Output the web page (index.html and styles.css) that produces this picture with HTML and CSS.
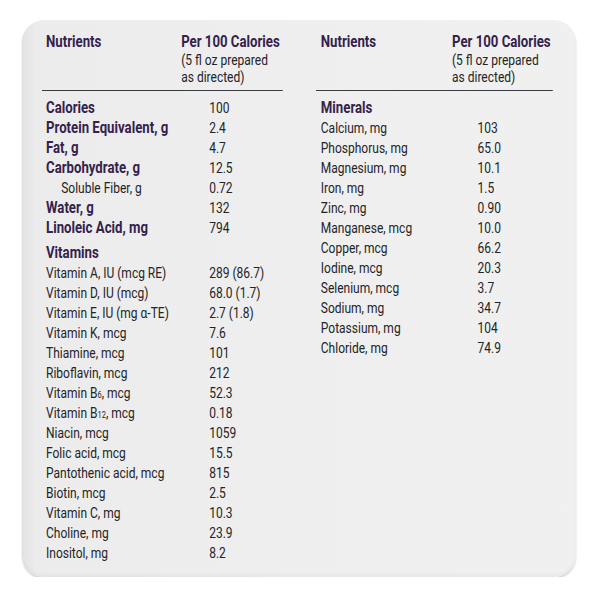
FILE: index.html
```html
<!DOCTYPE html>
<html>
<head>
<meta charset="utf-8">
<link rel="stylesheet" href="styles.css">
</head>
<body>
<div class="card">
  <div class="col">
    <div class="head">
      <div class="h-name">Nutrients</div>
      <div class="h-per"><b>Per 100 Calories</b><br>(5 fl oz prepared<br>as directed)</div>
    </div>
    <div class="sec first">
      <div class="row bold"><span>Calories</span><span class="v">100</span></div>
      <div class="row bold"><span>Protein Equivalent, g</span><span class="v">2.4</span></div>
      <div class="row bold"><span>Fat, g</span><span class="v">4.7</span></div>
      <div class="row bold"><span>Carbohydrate, g</span><span class="v">12.5</span></div>
      <div class="row indent"><span>Soluble Fiber, g</span><span class="v">0.72</span></div>
      <div class="row bold"><span>Water, g</span><span class="v">132</span></div>
      <div class="row bold"><span>Linoleic Acid, mg</span><span class="v">794</span></div>
    </div>
    <div class="sec">
      <div class="row bold"><span>Vitamins</span></div>
      <div class="row"><span>Vitamin A, IU (mcg RE)</span><span class="v">289 (86.7)</span></div>
      <div class="row"><span>Vitamin D, IU (mcg)</span><span class="v">68.0 (1.7)</span></div>
      <div class="row"><span>Vitamin E, IU (mg α-TE)</span><span class="v">2.7 (1.8)</span></div>
      <div class="row"><span>Vitamin K, mcg</span><span class="v">7.6</span></div>
      <div class="row"><span>Thiamine, mcg</span><span class="v">101</span></div>
      <div class="row"><span>Riboflavin, mcg</span><span class="v">212</span></div>
      <div class="row"><span>Vitamin B<span class="sub">6</span>, mcg</span><span class="v">52.3</span></div>
      <div class="row"><span>Vitamin B<span class="sub">12</span>, mcg</span><span class="v">0.18</span></div>
      <div class="row"><span>Niacin, mcg</span><span class="v">1059</span></div>
      <div class="row"><span>Folic acid, mcg</span><span class="v">15.5</span></div>
      <div class="row"><span>Pantothenic acid, mcg</span><span class="v">815</span></div>
      <div class="row"><span>Biotin, mcg</span><span class="v">2.5</span></div>
      <div class="row"><span>Vitamin C, mg</span><span class="v">10.3</span></div>
      <div class="row"><span>Choline, mg</span><span class="v">23.9</span></div>
      <div class="row"><span>Inositol, mg</span><span class="v">8.2</span></div>
    </div>
  </div>
  <div class="col right">
    <div class="head">
      <div class="h-name">Nutrients</div>
      <div class="h-per"><b>Per 100 Calories</b><br>(5 fl oz prepared<br>as directed)</div>
    </div>
    <div class="sec first">
      <div class="row bold"><span>Minerals</span></div>
      <div class="row"><span>Calcium, mg</span><span class="v">103</span></div>
      <div class="row"><span>Phosphorus, mg</span><span class="v">65.0</span></div>
      <div class="row"><span>Magnesium, mg</span><span class="v">10.1</span></div>
      <div class="row"><span>Iron, mg</span><span class="v">1.5</span></div>
      <div class="row"><span>Zinc, mg</span><span class="v">0.90</span></div>
      <div class="row"><span>Manganese, mcg</span><span class="v">10.0</span></div>
      <div class="row"><span>Copper, mcg</span><span class="v">66.2</span></div>
      <div class="row"><span>Iodine, mcg</span><span class="v">20.3</span></div>
      <div class="row"><span>Selenium, mcg</span><span class="v">3.7</span></div>
      <div class="row"><span>Sodium, mg</span><span class="v">34.7</span></div>
      <div class="row"><span>Potassium, mg</span><span class="v">104</span></div>
      <div class="row"><span>Chloride, mg</span><span class="v">74.9</span></div>
    </div>
  </div>
</div>
</body>
</html>
```
FILE: styles.css
```css
html, body {
  margin: 0;
  padding: 0;
  background: #ffffff;
}
body {
  font-family: Roboto, "Liberation Sans", sans-serif;
  color: #242426;
}
.card {
  margin: 20px 0 0 22px;
  width: 554px;
  height: 557px;
  box-sizing: border-box;
  padding: 13px 23px 0 20px;
  border-radius: 22px;
  background: linear-gradient(90deg, #e2e2e3 0px, #ececed 14px, #efeff0 60%, #f0f0f1 100%);
  box-shadow: 0 2px 2px rgba(0,0,0,0.18), inset 0 -3px 3px rgba(0,0,0,0.03);
  display: grid;
  grid-template-columns: 241px 237px;
  column-gap: 33px;
  align-items: start;
}
/* columns are set in a condensed face: scale the column horizontally */
.col {
  width: 301px;
  transform: scaleX(0.8);
  transform-origin: 0 0;
}
.col.right {
  width: 296px;
}
.head {
  display: grid;
  grid-template-columns: 169px 1fr;
  border-bottom: 1.5px solid #3c3a42;
  padding: 0 0 3px 5px;
  font-size: 15px;
  line-height: 17.5px;
  white-space: nowrap;
}
.right .head {
  grid-template-columns: 164px 1fr;
  padding-left: 6px;
}
.h-name {
  font-weight: bold;
  font-size: 16.5px;
  color: #34224b;
}
.h-per b {
  font-size: 16.5px;
  color: #34224b;
}
.sec {
  margin-top: 5px;
  padding-left: 5px;
}
.sec.first {
  margin-top: 7px;
}
.right .sec {
  padding-left: 6px;
}
.row {
  display: grid;
  grid-template-columns: 204px 1fr;
  height: 20px;
  line-height: 20px;
  font-size: 15px;
  white-space: nowrap;
}
.right .row {
  grid-template-columns: 196px 1fr;
}
.row.bold {
  font-weight: bold;
  font-size: 16.5px;
  color: #34224b;
}
.row.bold .v {
  font-weight: normal;
  font-size: 15px;
  color: #242426;
}
.row.indent > span:first-child {
  padding-left: 19px;
}
.sub {
  font-size: 0.62em;
}
```
